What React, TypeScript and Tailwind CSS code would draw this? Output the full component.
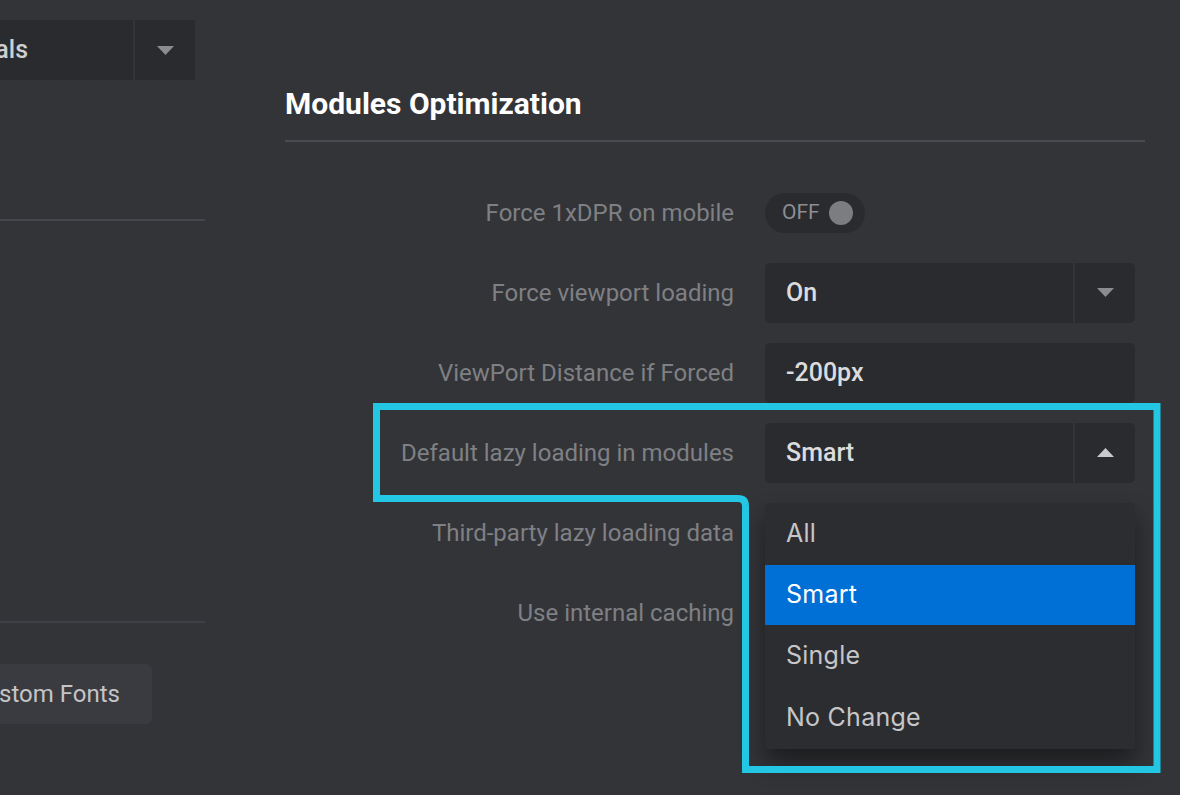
import React from 'react'

const labelCls = "w-[480px] text-right text-[24px] text-[#7f8084] pr-[31px] shrink-0 whitespace-nowrap"

function Caret({ up = false, light = false }: { up?: boolean; light?: boolean }) {
  return (
    <svg width="17" height="9" viewBox="0 0 17 9" className={up ? 'rotate-180' : ''}>
      <path d="M0 0 H17 L8.5 9 Z" fill={light ? '#c9cacd' : '#8b8c90'} />
    </svg>
  )
}

function Select({ value, up = false }: { value: string; up?: boolean }) {
  return (
    <div className="flex w-[370px] h-[60px] gap-[2px]">
      <div className="flex-1 flex items-center pl-[21px] bg-[#2a2b2f] rounded-l-[5px] text-[25px] font-medium text-[#dcdcde]">
        {value}
      </div>
      <div className="w-[60px] flex items-center justify-center bg-[#2a2b2f] rounded-r-[5px]">
        <Caret up={up} light={up} />
      </div>
    </div>
  )
}

export default function App() {
  const options = ['All', 'Smart', 'Single', 'No Change']

  return (
    <div
      className="relative w-[1180px] h-[795px] overflow-hidden bg-[#333438] flex"
      style={{ fontFamily: 'Roboto, "Liberation Sans", sans-serif' }}
    >
      {/* left column, cut off at the window edge */}
      <div className="w-[205px] shrink-0 flex flex-col">
        <div className="flex justify-end pr-[10px] pt-[20px]">
          <div className="flex h-[60px] gap-[2px]">
            <div className="w-[133px] flex items-center justify-end pr-[105px] bg-[#2a2b2f] text-[25px] font-medium text-[#cfcfd1] whitespace-nowrap overflow-hidden">
              als
            </div>
            <div className="w-[60px] flex items-center justify-center bg-[#2a2b2f]">
              <Caret />
            </div>
          </div>
        </div>
        <div className="mt-[139px] h-[2px] bg-[#45464c]" />
        <div className="mt-[400px] h-[2px] bg-[#3f4047]" />
        <div className="mt-[41px] flex">
          <div className="w-[152px] h-[60px] flex items-center justify-end pr-[32px] bg-[#3a3b40] rounded-r-[6px] text-[24px] text-[#c4c4c6] whitespace-nowrap overflow-hidden">
            stom Fonts
          </div>
        </div>
      </div>

      {/* main panel */}
      <div className="ml-[80px] w-[860px] flex flex-col">
        <h2 className="mt-[86px] text-[30px] font-bold text-white leading-[36px] whitespace-nowrap">Modules Optimization</h2>
        <div className="mt-[18px] h-[1.5px] bg-[#4a4b50]" />

        <div className="mt-[41px] flex flex-col gap-[20px]">
          <div className="flex items-center h-[60px]">
            <div className={labelCls}>Force 1xDPR on mobile</div>
            <div className="w-[100px] h-[40px] rounded-full bg-[#2a2b2f] flex items-center pl-[17px] gap-[9px]">
              <span className="text-[21px] text-[#8d8e92] leading-none">OFF</span>
              <span className="w-[24px] h-[24px] rounded-full bg-[#7c7d81]" />
            </div>
          </div>

          <div className="flex items-center h-[60px]">
            <div className={labelCls}>Force viewport loading</div>
            <Select value="On" />
          </div>

          <div className="flex items-center h-[60px]">
            <div className={labelCls}>ViewPort Distance if Forced</div>
            <div className="w-[370px] h-[60px] flex items-center pl-[21px] bg-[#2a2b2f] rounded-[5px] text-[25px] font-medium text-[#dcdcde]">
              -200px
            </div>
          </div>

          <div className="flex items-center h-[60px] relative">
            <div className={labelCls}>Default lazy loading in modules</div>
            <Select value="Smart" up />
            {/* open dropdown */}
            <div
              className="absolute left-[480px] top-[80px] w-[370px] bg-[#2c2d31] rounded-[4px] shadow-[0_14px_24px_rgba(0,0,0,0.45)] z-10"
              style={{ fontFamily: 'Inter, "Liberation Sans", sans-serif' }}
            >
              {options.map((o) => (
                <div
                  key={o}
                  className={`flex items-center pl-[21px] text-[25px] tracking-[0.01em] ${
                    o === 'Smart' ? 'h-[60px] bg-[#006fd6] text-white' : 'h-[62px] text-[#c6c6c8]'
                  }`}
                >
                  {o}
                </div>
              ))}
            </div>
          </div>

          <div className="flex items-center h-[60px]">
            <div className={labelCls}>Third-party lazy loading data</div>
          </div>

          <div className="flex items-center h-[60px]">
            <div className={labelCls}>Use internal caching</div>
          </div>
        </div>
      </div>

      {/* highlight annotation */}
      <svg className="absolute inset-0 z-20 pointer-events-none" width="1180" height="795" viewBox="0 0 1180 795">
        <path
          d="M376.5 406.5 H1157 V769.5 H745.5 V506 Q745.5 498.5 738 498.5 H376.5 Z"
          fill="none"
          stroke="#23c6e3"
          strokeWidth="7"
        />
      </svg>
    </div>
  )
}
